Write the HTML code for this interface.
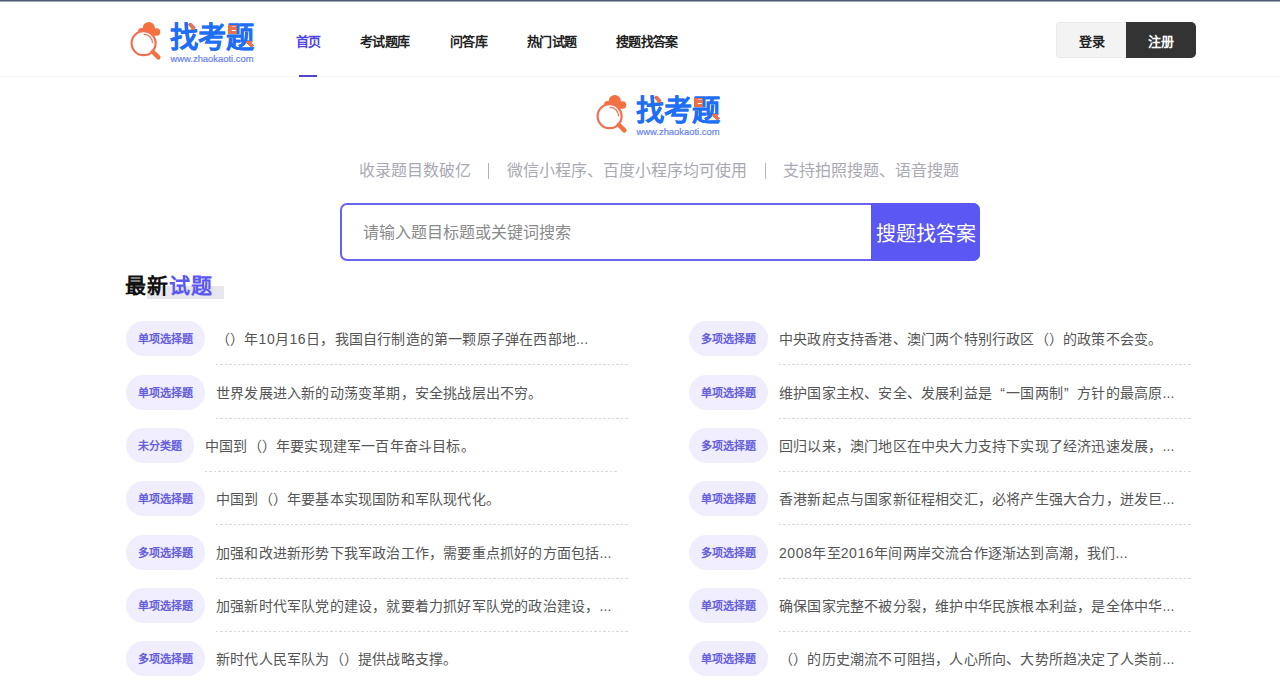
<!DOCTYPE html>
<html lang="zh-CN"><head><meta charset="utf-8">
<style>
*{margin:0;padding:0;box-sizing:border-box}
html,body{width:1280px;height:683px;overflow:hidden;background:#fff}
body{position:relative;font-family:"Liberation Sans",sans-serif;color:#333}
.abs{position:absolute;white-space:nowrap}
#topline{position:absolute;left:0;top:0;width:1280px;height:1px;background:#4b5d6e}
#topline2{position:absolute;left:0;top:1px;width:1280px;height:1px;background:#9aa8b2}
#hdrline{position:absolute;left:0;top:76px;width:1280px;height:1px;background:#f6f6f6}
.nav{position:absolute;top:31.5px;font-size:13px;letter-spacing:-0.65px;font-weight:bold;color:#222;line-height:20px}
.nav.on{color:#5046e5}
#navbar{position:absolute;left:299px;top:75px;width:18px;height:2px;background:#4e46c6}
.btn{position:absolute;top:22px;height:36px;line-height:39px;font-size:13px;font-weight:bold;text-align:center}
#login{left:1056px;width:70px;background:#f3f3f3;border:1px solid #e9e9e9;border-right:none;border-radius:4px 0 0 4px;color:#222;line-height:37px}
#reg{left:1126px;width:70px;background:#333;color:#fff;border-radius:0 5px 5px 0}
.sub{position:absolute;top:161px;font-size:16px;color:#a9a9b3;line-height:20px;white-space:nowrap}
.sep{position:absolute;top:163px;width:1px;height:16px;background:#b4b4bc}
#search{position:absolute;left:340px;top:203px;width:640px;height:58px;border:2px solid #6a62ee;border-radius:7px;background:#fff}
#ph{position:absolute;left:363px;top:223px;font-size:16px;color:#8a8a8a;line-height:20px;white-space:nowrap}
#sbtn{position:absolute;left:871px;top:203px;width:109px;height:58px;background:#5b57f2;border-radius:0 7px 7px 0;color:#fff;font-size:20px;line-height:62px;text-indent:5px;white-space:nowrap}
#h2{position:absolute;left:125px;top:272px;font-size:21px;letter-spacing:1px;font-weight:bold;color:#111;line-height:28px;white-space:nowrap;z-index:2}
#h2 span{color:#5b57f2}
#h2bar{position:absolute;left:147px;top:286px;width:77px;height:13px;background:#e6e6ec;z-index:1}
.row{position:absolute;height:36px}
.lq{display:inline-block;width:14.2px;text-align:right;padding-right:1px}
.rq{display:inline-block;width:14.2px;text-align:left;padding-left:1px}
.d{letter-spacing:0.55px}
.tag{position:absolute;left:0;top:0;height:35px;line-height:37px;border-radius:18px;background:#f0eefd;color:#6660dc;font-size:11px;font-weight:bold;text-align:center}
.q{position:absolute;top:0;height:44px;width:414px;font-size:14px;letter-spacing:0.2px;line-height:37px;color:#555;font-weight:350;background:repeating-linear-gradient(90deg,#d9d9d9 0 2.4px,transparent 2.4px 4.4px) left bottom/100% 1px no-repeat;white-space:nowrap;overflow:hidden}
</style></head><body>
<div id="topline"></div><div id="topline2"></div>
<div id="hdrline"></div>

<!-- header logo -->
<svg id="logo1" style="position:absolute;left:126px;top:19px" width="130" height="46" viewBox="0 0 130 46">
<defs><clipPath id="logo1c1"><rect x="100" y="5" width="12" height="10"/></clipPath>
<clipPath id="logo1c2"><rect x="63" y="3" width="6" height="7"/><rect x="101" y="5.5" width="10" height="8.3"/><rect x="120.5" y="21" width="7" height="5.8"/></clipPath></defs>
<g fill="#f5703f" stroke="none">
<circle cx="22.8" cy="9" r="6.1"/><circle cx="30.5" cy="13" r="3.8"/><circle cx="15.5" cy="12.5" r="3.4"/><ellipse cx="24" cy="13.5" rx="8" ry="4"/>
</g>
<circle cx="17.6" cy="24.2" r="12" fill="#fff" stroke="#f07052" stroke-width="2.2"/>
<path d="M17.6 15.2 A9 9 0 0 1 26.6 24.2" fill="none" stroke="#ef7a5a" stroke-width="1.4"/>
<path d="M26.8 32.8 L32.4 38.4" stroke="#f5703f" stroke-width="4.4" stroke-linecap="round"/>
<g font-family="Liberation Sans, sans-serif" font-weight="700" font-size="28" transform="translate(-0.3,0.5) scale(1,1.03)">
<text x="44.5" y="27.6" fill="#1f6ff6" stroke="#1f6ff6" stroke-width="0.15" letter-spacing="-0.8" font-size="28.2">找考题</text>
<text x="44.5" y="27.6" fill="#f5703f" stroke="#f5703f" stroke-width="0.15" letter-spacing="-0.8" font-size="28.2" clip-path="url(#logo1c2)">找考题</text>
</g>
<text x="44.5" y="42.6" font-family="Liberation Sans, sans-serif" font-size="8.4" fill="#6b86ec" stroke="#6b86ec" stroke-width="0.2" textLength="83" lengthAdjust="spacingAndGlyphs">www.zhaokaoti.com</text>
</svg>

<div class="nav on" style="left:296px">首页</div>
<div class="nav" style="left:360px">考试题库</div>
<div class="nav" style="left:450px">问答库</div>
<div class="nav" style="left:527px">热门试题</div>
<div class="nav" style="left:616px">搜题找答案</div>
<div id="navbar"></div>

<div class="btn" id="login">登录</div>
<div class="btn" id="reg">注册</div>

<svg id="logo2" style="position:absolute;left:592px;top:92px" width="130" height="46" viewBox="0 0 130 46">
<defs><clipPath id="logo2c1"><rect x="100" y="5" width="12" height="10"/></clipPath>
<clipPath id="logo2c2"><rect x="63" y="3" width="6" height="7"/><rect x="101" y="5.5" width="10" height="8.3"/><rect x="120.5" y="21" width="7" height="5.8"/></clipPath></defs>
<g fill="#f5703f" stroke="none">
<circle cx="22.8" cy="9" r="6.1"/><circle cx="30.5" cy="13" r="3.8"/><circle cx="15.5" cy="12.5" r="3.4"/><ellipse cx="24" cy="13.5" rx="8" ry="4"/>
</g>
<circle cx="17.6" cy="24.2" r="12" fill="#fff" stroke="#f07052" stroke-width="2.2"/>
<path d="M17.6 15.2 A9 9 0 0 1 26.6 24.2" fill="none" stroke="#ef7a5a" stroke-width="1.4"/>
<path d="M26.8 32.8 L32.4 38.4" stroke="#f5703f" stroke-width="4.4" stroke-linecap="round"/>
<g font-family="Liberation Sans, sans-serif" font-weight="700" font-size="28" transform="translate(-0.3,0.5) scale(1,1.03)">
<text x="44.5" y="27.6" fill="#1f6ff6" stroke="#1f6ff6" stroke-width="0.15" letter-spacing="-0.8" font-size="28.2">找考题</text>
<text x="44.5" y="27.6" fill="#f5703f" stroke="#f5703f" stroke-width="0.15" letter-spacing="-0.8" font-size="28.2" clip-path="url(#logo2c2)">找考题</text>
</g>
<text x="44.5" y="42.6" font-family="Liberation Sans, sans-serif" font-size="8.4" fill="#6b86ec" stroke="#6b86ec" stroke-width="0.2" textLength="83" lengthAdjust="spacingAndGlyphs">www.zhaokaoti.com</text>
</svg>

<div class="sub" style="left:359px">收录题目数破亿</div>
<div class="sep" style="left:488px"></div>
<div class="sub" style="left:507px">微信小程序、百度小程序均可使用</div>
<div class="sep" style="left:765px"></div>
<div class="sub" style="left:783px">支持拍照搜题、语音搜题</div>

<div id="search"></div>
<div id="ph">请输入题目标题或关键词搜索</div>
<div id="sbtn">搜题找答案</div>

<div id="h2">最新<span>试题</span></div>
<div id="h2bar"></div>

<!--LIST-->
<div class="row" style="left:126px;top:321px"><div class="tag" style="width:79px">单项选择题</div><div class="q" style="left:90px">（）年<span class="d">10</span>月<span class="d">16</span>日，我国自行制造的第一颗原子弹在西部地...</div></div>
<div class="row" style="left:126px;top:375px"><div class="tag" style="width:79px">单项选择题</div><div class="q" style="left:90px">世界发展进入新的动荡变革期，安全挑战层出不穷。</div></div>
<div class="row" style="left:126px;top:428px"><div class="tag" style="width:68px">未分类题</div><div class="q" style="left:79px">中国到（）年要实现建军一百年奋斗目标。</div></div>
<div class="row" style="left:126px;top:481px"><div class="tag" style="width:79px">单项选择题</div><div class="q" style="left:90px">中国到（）年要基本实现国防和军队现代化。</div></div>
<div class="row" style="left:126px;top:535px"><div class="tag" style="width:79px">多项选择题</div><div class="q" style="left:90px">加强和改进新形势下我军政治工作，需要重点抓好的方面包括...</div></div>
<div class="row" style="left:126px;top:588px"><div class="tag" style="width:79px">单项选择题</div><div class="q" style="left:90px">加强新时代军队党的建设，就要着力抓好军队党的政治建设，...</div></div>
<div class="row" style="left:126px;top:641px"><div class="tag" style="width:79px">多项选择题</div><div class="q" style="left:90px">新时代人民军队为（）提供战略支撑。</div></div>
<div class="row" style="left:689px;top:321px"><div class="tag" style="width:79px">多项选择题</div><div class="q" style="left:90px">中央政府支持香港、澳门两个特别行政区（）的政策不会变。</div></div>
<div class="row" style="left:689px;top:375px"><div class="tag" style="width:79px">单项选择题</div><div class="q" style="left:90px">维护国家主权、安全、发展利益是<span class="lq">“</span>一国两制<span class="rq">”</span>方针的最高原...</div></div>
<div class="row" style="left:689px;top:428px"><div class="tag" style="width:79px">多项选择题</div><div class="q" style="left:90px">回归以来，澳门地区在中央大力支持下实现了经济迅速发展，...</div></div>
<div class="row" style="left:689px;top:481px"><div class="tag" style="width:79px">单项选择题</div><div class="q" style="left:90px">香港新起点与国家新征程相交汇，必将产生强大合力，迸发巨...</div></div>
<div class="row" style="left:689px;top:535px"><div class="tag" style="width:79px">多项选择题</div><div class="q" style="left:90px"><span class="d">2008</span>年至<span class="d">2016</span>年间两岸交流合作逐渐达到高潮，我们...</div></div>
<div class="row" style="left:689px;top:588px"><div class="tag" style="width:79px">单项选择题</div><div class="q" style="left:90px">确保国家完整不被分裂，维护中华民族根本利益，是全体中华...</div></div>
<div class="row" style="left:689px;top:641px"><div class="tag" style="width:79px">单项选择题</div><div class="q" style="left:90px">（）的历史潮流不可阻挡，人心所向、大势所趋决定了人类前...</div></div>
<!--/LIST-->
</body></html>
